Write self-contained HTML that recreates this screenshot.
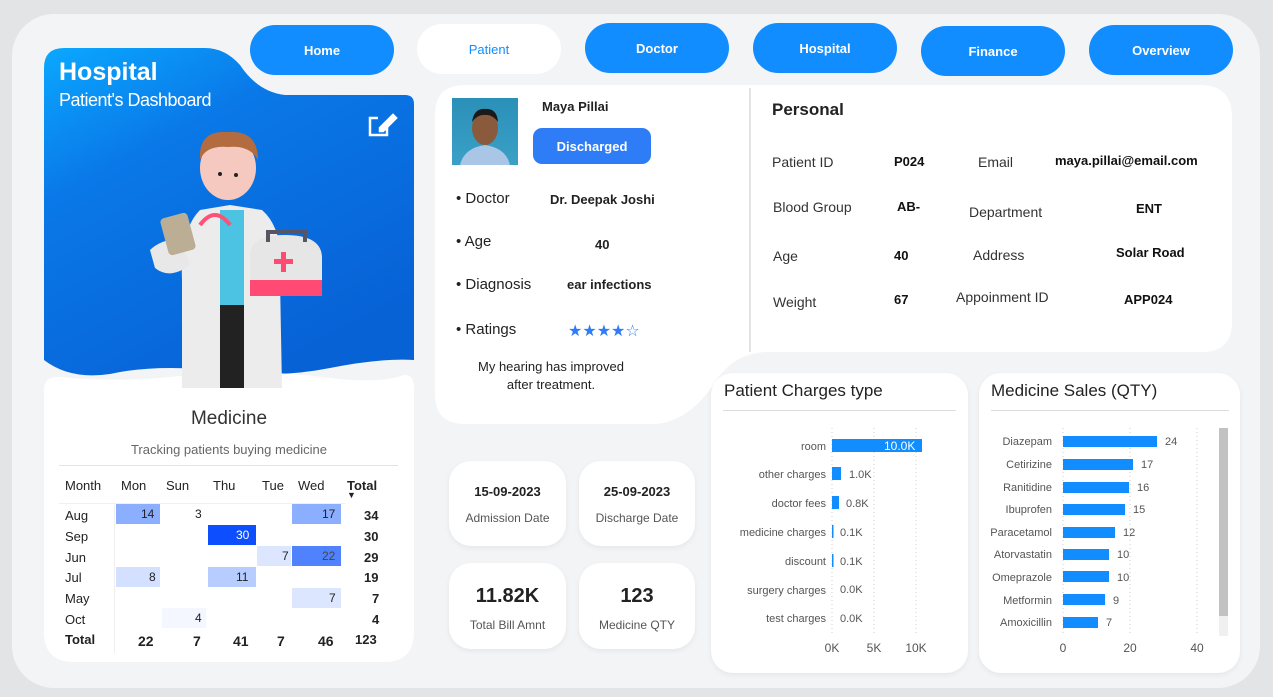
<!DOCTYPE html>
<html><head><meta charset="utf-8"><style>
*{margin:0;padding:0;box-sizing:border-box}
body{width:1273px;height:697px;background:#e3e4e6;font-family:"Liberation Sans","DejaVu Sans",sans-serif;position:relative;overflow:hidden;color:#222}
.a{position:absolute}
.nav{position:absolute;width:144px;height:50px;border-radius:25px;background:#118dff;color:#fff;font-weight:bold;font-size:13px;display:flex;align-items:center;justify-content:center}
.card{position:absolute;background:#fff;border-radius:22px;box-shadow:0 2px 6px rgba(0,0,0,.06)}
.t{position:absolute;white-space:nowrap}
.b{font-weight:bold}
.lbl{font-size:11px;color:#555;text-align:right;width:120px}
</style></head><body>
<div class="a" style="left:12px;top:14px;width:1248px;height:674px;background:#f3f4f6;border-radius:42px"></div>

<div class="nav" style="left:250px;top:25px">Home</div>
<div class="nav" style="left:417px;top:24px;background:#fff;color:#118dff;font-weight:normal">Patient</div>
<div class="nav" style="left:585px;top:23px">Doctor</div>
<div class="nav" style="left:753px;top:23px">Hospital</div>
<div class="nav" style="left:921px;top:26px">Finance</div>
<div class="nav" style="left:1089px;top:25px">Overview</div>

<svg class="a" style="left:0;top:0" width="1273" height="697">
<defs><linearGradient id="g" x1="0" y1="0" x2="0.6" y2="1"><stop offset="0" stop-color="#0aa8ff"/><stop offset="0.35" stop-color="#0a78e8"/><stop offset="1" stop-color="#0762d6"/></linearGradient></defs>
<path d="M64,48 H205 Q225,48 240,65 Q258,92 285,95 H405 Q414,95 414,104 V360 Q380,358 330,368 Q280,378 230,372 Q160,363 110,374 Q70,380 44,360 V68 Q44,48 64,48 Z" fill="url(#g)"/>
<path d="M465,85 H1200 Q1232,85 1232,117 V322 Q1232,352 1202,352 H765 Q735,354 718,378 Q690,422 655,424 H465 Q435,424 435,394 V115 Q435,85 465,85 Z" fill="#fff"/>
<line x1="750" y1="88" x2="750" y2="352" stroke="#e2e2e2" stroke-width="2"/>
<path d="M44,390 Q44,376 60,377 Q120,383 180,376 Q260,368 330,378 Q380,384 404,375 Q414,374 414,388 V632 Q414,662 384,662 H74 Q44,662 44,632 Z" fill="#fff"/>
<!-- doctor -->
<g>
<path d="M182,280 Q180,230 200,210 L230,205 L262,210 Q285,230 280,280 L282,388 H182 Z" fill="#ececec"/>
<rect x="220" y="210" width="24" height="100" fill="#4cc3e3"/>
<rect x="220" y="305" width="24" height="83" fill="#222"/>
<ellipse cx="228" cy="168" rx="28" ry="32" fill="#f6c9c0"/>
<path d="M200,160 Q198,130 228,132 Q258,130 258,160 Q250,145 228,147 Q206,145 200,160 Z" fill="#b36c3f"/>
<circle cx="220" cy="174" r="2" fill="#222"/><circle cx="236" cy="175" r="2" fill="#222"/>
<path d="M150,250 Q160,240 180,238 L190,265 Q170,280 155,268 Z" fill="#e8e8e8"/>
<rect x="164" y="215" width="28" height="38" rx="4" fill="#bcae94" transform="rotate(-15 178 234)"/>
<path d="M200,225 Q215,205 230,225" stroke="#ff5075" stroke-width="4" fill="none"/>
<path d="M250,255 Q250,235 285,235 Q322,235 322,258 V290 H250 Z" fill="#e6e6e6"/>
<rect x="250" y="280" width="72" height="16" fill="#ff4a73"/>
<path d="M268,242 V232 H305 V242" stroke="#556" stroke-width="4" fill="none"/>
<rect x="281" y="252" width="5" height="20" fill="#ff4a73"/><rect x="274" y="259" width="19" height="5" fill="#ff4a73"/>
</g>
<!-- edit icon -->
<g stroke="#fff" stroke-width="2.5" fill="none"><path d="M378,118 H370 V135 H387 V127"/><path d="M380,128 L393,115 L396,118 L383,131 H380 Z" fill="#fff"/></g>
</svg>

<div class="t b" style="left:59px;top:58px;font-size:25px;color:#fff">Hospital</div>
<div class="t" style="left:59px;top:90px;font-size:18px;color:#fff;letter-spacing:-0.5px">Patient's Dashboard</div>

<!-- Medicine -->
<div class="t" style="left:44px;width:370px;text-align:center;top:408px;font-size:19px;color:#333">Medicine</div>
<div class="t" style="left:44px;width:370px;text-align:center;top:442px;font-size:13px;color:#666">Tracking patients buying medicine</div>
<div class="a" style="left:59px;top:465px;width:339px;height:1px;background:#e3e3e3"></div>
<div class="a" style="left:114px;top:505px;width:1px;height:148px;background:#eee"></div>
<div class="a" style="left:59px;top:503px;width:286px;height:1px;background:#f0f0f0"></div>
<div style="position:absolute;left:0;top:0;font-size:13px">
<div class="t" style="left:65px;top:478px">Month</div><div class="t" style="left:121px;top:478px">Mon</div><div class="t" style="left:166px;top:478px">Sun</div><div class="t" style="left:213px;top:478px">Thu</div><div class="t" style="left:262px;top:478px">Tue</div><div class="t" style="left:298px;top:478px">Wed</div><div class="t b" style="left:347px;top:478px">Total</div>
<div class="t" style="left:347px;top:490px;font-size:9px">▼</div>
<div class="a" style="left:116px;top:504px;width:44px;height:20px;background:#8caeff"></div>
<div class="a" style="left:292px;top:504px;width:49px;height:20px;background:#8caeff"></div>
<div class="a" style="left:208px;top:525px;width:48px;height:20px;background:#0d4ffe"></div>
<div class="a" style="left:257px;top:546px;width:34px;height:20px;background:#dce7ff"></div>
<div class="a" style="left:292px;top:546px;width:49px;height:20px;background:#5182fd"></div>
<div class="a" style="left:116px;top:567px;width:44px;height:20px;background:#d3e0ff"></div>
<div class="a" style="left:208px;top:567px;width:48px;height:20px;background:#b8cdff"></div>
<div class="a" style="left:292px;top:588px;width:49px;height:20px;background:#dce7ff"></div>
<div class="a" style="left:162px;top:608px;width:44px;height:20px;background:#f4f7ff"></div>
<div class="t" style="left:65px;top:508px">Aug</div><div class="t" style="left:65px;top:529px">Sep</div><div class="t" style="left:65px;top:550px">Jun</div><div class="t" style="left:65px;top:570px">Jul</div><div class="t" style="left:65px;top:591px">May</div><div class="t" style="left:65px;top:612px">Oct</div>
<div class="t b" style="left:65px;top:632px">Total</div>
<div class="t" style="left:141px;top:507px;font-size:12px">14</div><div class="t" style="left:195px;top:507px;font-size:12px">3</div><div class="t" style="left:322px;top:507px;font-size:12px">17</div>
<div class="t" style="left:236px;top:528px;font-size:12px;color:#fff">30</div>
<div class="t" style="left:282px;top:549px;font-size:12px">7</div><div class="t" style="left:322px;top:549px;font-size:12px;color:#444">22</div>
<div class="t" style="left:149px;top:570px;font-size:12px">8</div><div class="t" style="left:236px;top:570px;font-size:12px">11</div>
<div class="t" style="left:329px;top:591px;font-size:12px">7</div>
<div class="t" style="left:195px;top:611px;font-size:12px">4</div>
<div class="t b" style="left:364px;top:508px">34</div><div class="t b" style="left:364px;top:529px">30</div><div class="t b" style="left:364px;top:550px">29</div><div class="t b" style="left:364px;top:570px">19</div><div class="t b" style="left:372px;top:591px">7</div><div class="t b" style="left:372px;top:612px">4</div>
<div class="t b" style="left:138px;top:633px;font-size:14px">22</div><div class="t b" style="left:193px;top:633px;font-size:14px">7</div><div class="t b" style="left:233px;top:633px;font-size:14px">41</div><div class="t b" style="left:277px;top:633px;font-size:14px">7</div><div class="t b" style="left:318px;top:633px;font-size:14px">46</div><div class="t b" style="left:355px;top:632px">123</div>
</div>

<!-- Patient card -->
<div class="a" style="left:452px;top:98px;width:66px;height:67px;background:linear-gradient(#2a90b8,#3aa0c6)">
<svg width="66" height="67"><path d="M8,67 Q12,50 33,47 Q54,50 58,67 Z" fill="#a9c6e6"/><ellipse cx="33" cy="30" rx="13" ry="17" fill="#8a5a3c"/><path d="M20,24 Q22,10 33,11 Q45,10 46,24 Q40,16 33,17 Q26,16 20,24Z" fill="#1a1a1a"/></svg></div>
<div class="t b" style="left:542px;top:99px;font-size:13px">Maya Pillai</div>
<div class="a" style="left:533px;top:128px;width:118px;height:36px;border-radius:9px;background:#2e7cf6;color:#fff;font-weight:bold;font-size:13px;display:flex;align-items:center;justify-content:center">Discharged</div>
<div class="t" style="left:456px;top:190px;font-size:15px">• Doctor</div><div class="t b" style="left:550px;top:192px;font-size:13px">Dr. Deepak Joshi</div>
<div class="t" style="left:456px;top:233px;font-size:15px">• Age</div><div class="t b" style="left:595px;top:237px;font-size:13px">40</div>
<div class="t" style="left:456px;top:276px;font-size:15px">• Diagnosis</div><div class="t b" style="left:567px;top:277px;font-size:13px">ear infections</div>
<div class="t" style="left:456px;top:321px;font-size:15px">• Ratings</div><div class="t" style="left:568px;top:321px;font-size:16px;color:#2e7cf6">★★★★☆</div>
<div class="t" style="left:440px;width:222px;text-align:center;top:358px;font-size:13px;line-height:18px">My hearing has improved<br>after treatment.</div>

<!-- Personal -->
<div class="t b" style="left:772px;top:100px;font-size:17px">Personal</div>
<div style="position:absolute;left:0;top:0;font-size:14px;color:#333">
<div class="t" style="left:772px;top:154px">Patient ID</div><div class="t b" style="left:894px;top:154px;font-size:13px;color:#111">P024</div>
<div class="t" style="left:978px;top:154px">Email</div><div class="t b" style="left:1055px;top:153px;font-size:13px;color:#111">maya.pillai@email.com</div>
<div class="t" style="left:773px;top:199px">Blood Group</div><div class="t b" style="left:897px;top:199px;font-size:13px;color:#111">AB-</div>
<div class="t" style="left:969px;top:204px">Department</div><div class="t b" style="left:1136px;top:201px;font-size:13px;color:#111">ENT</div>
<div class="t" style="left:773px;top:248px">Age</div><div class="t b" style="left:894px;top:248px;font-size:13px;color:#111">40</div>
<div class="t" style="left:973px;top:247px">Address</div><div class="t b" style="left:1116px;top:245px;font-size:13px;color:#111">Solar Road</div>
<div class="t" style="left:773px;top:294px">Weight</div><div class="t b" style="left:894px;top:292px;font-size:13px;color:#111">67</div>
<div class="t" style="left:956px;top:289px">Appoinment ID</div><div class="t b" style="left:1124px;top:292px;font-size:13px;color:#111">APP024</div>
</div>

<!-- small cards -->
<div class="card" style="left:449px;top:461px;width:117px;height:85px"></div>
<div class="card" style="left:579px;top:461px;width:116px;height:85px"></div>
<div class="card" style="left:449px;top:563px;width:117px;height:86px"></div>
<div class="card" style="left:579px;top:563px;width:116px;height:86px"></div>
<div class="t b" style="left:449px;width:117px;text-align:center;top:484px;font-size:13px">15-09-2023</div>
<div class="t" style="left:449px;width:117px;text-align:center;top:511px;font-size:12px;color:#555">Admission Date</div>
<div class="t b" style="left:579px;width:116px;text-align:center;top:484px;font-size:13px">25-09-2023</div>
<div class="t" style="left:579px;width:116px;text-align:center;top:511px;font-size:12px;color:#555">Discharge Date</div>
<div class="t b" style="left:449px;width:117px;text-align:center;top:585px;font-size:20px">11.82K</div>
<div class="t" style="left:449px;width:117px;text-align:center;top:618px;font-size:12px;color:#555">Total Bill Amnt</div>
<div class="t b" style="left:579px;width:116px;text-align:center;top:585px;font-size:20px">123</div>
<div class="t" style="left:579px;width:116px;text-align:center;top:618px;font-size:12px;color:#555">Medicine QTY</div>

<!-- charges chart -->
<div class="card" style="left:711px;top:373px;width:257px;height:300px"></div>
<div class="card" style="left:979px;top:373px;width:261px;height:300px"></div>
<div class="t" style="left:724px;top:381px;font-size:17px;color:#222">Patient Charges type</div>
<div class="a" style="left:723px;top:410px;width:233px;height:1px;background:#ddd"></div>
<div class="t" style="left:991px;top:381px;font-size:17px;color:#222">Medicine Sales (QTY)</div>
<div class="a" style="left:991px;top:410px;width:238px;height:1px;background:#ddd"></div>
<svg class="a" style="left:0;top:0" width="1273" height="697">
<g stroke="#ccc" stroke-dasharray="1,3"><line x1="832" y1="428" x2="832" y2="635"/><line x1="874" y1="428" x2="874" y2="635"/><line x1="916" y1="428" x2="916" y2="635"/>
<line x1="1063" y1="428" x2="1063" y2="635"/><line x1="1130" y1="428" x2="1130" y2="635"/><line x1="1197" y1="428" x2="1197" y2="635"/></g>
<g fill="#118dff"><rect x="832" y="439" width="90" height="13"/><rect x="832" y="467" width="9" height="13"/><rect x="832" y="496" width="7" height="13"/><rect x="832" y="525" width="1.5" height="13"/><rect x="832" y="554" width="1.5" height="13"/>
<rect x="1063" y="436" width="94" height="11"/><rect x="1063" y="459" width="70" height="11"/><rect x="1063" y="482" width="66" height="11"/><rect x="1063" y="504" width="62" height="11"/><rect x="1063" y="527" width="52" height="11"/><rect x="1063" y="549" width="46" height="11"/><rect x="1063" y="571" width="46" height="11"/><rect x="1063" y="594" width="42" height="11"/><rect x="1063" y="617" width="35" height="11"/></g>
<rect x="1219" y="428" width="9" height="188" fill="#c2c2c2"/><rect x="1219" y="616" width="9" height="20" fill="#f0f0f0"/>
<g font-family="Liberation Sans,sans-serif" font-size="11" fill="#555" text-anchor="end">
<text x="826" y="450">room</text><text x="826" y="478">other charges</text><text x="826" y="507">doctor fees</text><text x="826" y="536">medicine charges</text><text x="826" y="565">discount</text><text x="826" y="594">surgery charges</text><text x="826" y="622">test charges</text>
<text x="1052" y="445">Diazepam</text><text x="1052" y="468">Cetirizine</text><text x="1052" y="491">Ranitidine</text><text x="1052" y="513">Ibuprofen</text><text x="1052" y="536">Paracetamol</text><text x="1052" y="558">Atorvastatin</text><text x="1052" y="581">Omeprazole</text><text x="1052" y="604">Metformin</text><text x="1052" y="626">Amoxicillin</text>
</g>
<g font-family="Liberation Sans,sans-serif" font-size="11" fill="#555">
<text x="884" y="450" fill="#fff" font-size="12">10.0K</text><text x="849" y="478">1.0K</text><text x="846" y="507">0.8K</text><text x="840" y="536">0.1K</text><text x="840" y="565">0.1K</text><text x="840" y="593">0.0K</text><text x="840" y="622">0.0K</text>
<text x="1165" y="445">24</text><text x="1141" y="468">17</text><text x="1137" y="491">16</text><text x="1133" y="513">15</text><text x="1123" y="536">12</text><text x="1117" y="558">10</text><text x="1117" y="581">10</text><text x="1113" y="604">9</text><text x="1106" y="626">7</text>
<g text-anchor="middle" font-size="12"><text x="832" y="652">0K</text><text x="874" y="652">5K</text><text x="916" y="652">10K</text><text x="1063" y="652">0</text><text x="1130" y="652">20</text><text x="1197" y="652">40</text></g>
</g>
</svg>
</body></html>
